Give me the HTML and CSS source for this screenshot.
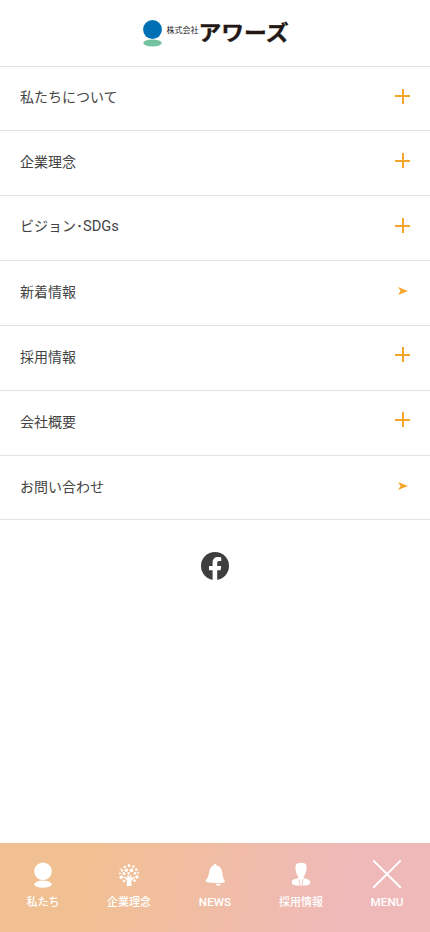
FILE: index.html
```html
<!DOCTYPE html>
<html lang="ja">
<head>
<meta charset="utf-8">
<meta name="viewport" content="width=device-width, initial-scale=1">
<title>株式会社アワーズ</title>
<link rel="stylesheet" href="styles.css">
</head>
<body>
<header class="header">
  <a class="logo">
    <svg class="logo-mark" viewBox="0 0 19 27"><circle cx="9.5" cy="9.5" r="9.4" fill="#0070b5"/><ellipse cx="9.5" cy="23" rx="9.3" ry="3.5" fill="#72c29f"/></svg>
    <svg class="logo-text" viewBox="0 0 124 27">
      <text class="logo-prefix" x="0.5" y="12.5" textLength="32" lengthAdjust="spacingAndGlyphs">株式会社</text>
      <text class="logo-name" x="32.5" y="20" textLength="90" lengthAdjust="spacingAndGlyphs">アワーズ</text>
    </svg>
  </a>
</header>
<nav class="menu">
  <a class="row"><span>私たちについて</span><i class="plus"></i></a>
  <a class="row"><span>企業理念</span><i class="plus"></i></a>
  <a class="row"><span>ビジョン<span class="dot">･</span><span class="latin">SDGs</span></span><i class="plus"></i></a>
  <a class="row"><span>新着情報</span><svg class="arrow" viewBox="0 0 10 8"><path d="M0 0 10 4 0 8 2.6 4Z"/></svg></a>
  <a class="row"><span>採用情報</span><i class="plus raised"></i></a>
  <a class="row"><span>会社概要</span><i class="plus raised"></i></a>
  <a class="row"><span>お問い合わせ</span><svg class="arrow" viewBox="0 0 10 8"><path d="M0 0 10 4 0 8 2.6 4Z"/></svg></a>
</nav>
<div class="social">
  <svg viewBox="0 0 28 28"><circle cx="14" cy="14" r="14" fill="#3e3e3e"/><path fill="#fff" d="M11.6 28V18.2H8v-4.3h3.6v-3.2c0-3.8 2.1-5.7 5.5-5.7 1.5 0 3.1.3 3.1.3v3.6h-1.8c-1.6 0-2.2.9-2.2 2.1v2.9h4l-.6 4.3h-3.4V28Z"/></svg>
</div>
<footer class="tabs">
  <a class="tab"><svg viewBox="0 0 30 30"><circle cx="15" cy="12.2" r="8.8"/><ellipse cx="15" cy="25.2" rx="8.7" ry="3.6"/></svg><span>私たち</span></a>
  <a class="tab"><svg viewBox="0 0 30 30"><path d="M12.4 27c.8-2.4.6-4.6.2-6.3L9.3 18l.7-.7 3.2 1.8.4-3h1.2l.4 2.6 1.4-2.9.9.4-.3 2.9 3-1.6.8.7-3.4 3.2c-.4 1.8-.4 3.8.2 5.6Z"/><circle cx="15" cy="6.7" r="1.4"/><circle cx="10.7" cy="8" r="1.3"/><circle cx="19.3" cy="7.5" r="1.3"/><circle cx="22.3" cy="10.5" r="1.2"/><circle cx="17.5" cy="11.3" r="1.9"/><circle cx="12.3" cy="11.3" r="1.7"/><circle cx="8" cy="11.5" r="1.2"/><circle cx="10" cy="14.5" r="1.5"/><circle cx="6" cy="14.5" r="1"/><circle cx="7.3" cy="18.3" r="1.8"/><circle cx="14.6" cy="14.3" r="1.2"/><circle cx="21" cy="14.3" r="1.4"/><circle cx="24.2" cy="13.8" r="1"/><circle cx="23" cy="18" r="1.7"/><circle cx="20.5" cy="21.6" r="1.3"/><circle cx="10" cy="22" r="1.3"/><circle cx="6.2" cy="10" r=".7"/></svg><span>企業理念</span></a>
  <a class="tab"><svg viewBox="0 0 30 30"><path d="M13.6 6.6c0-2.2 3-2.2 3 0 4.2 1 5.2 4 5.7 7.4.5 3.7 1 5.9 2.4 8 .4 1-.2 1.7-1.1 1.7-5.6.9-11.7.3-17.1-.7-.9-.2-1.2-1-.7-1.7 2.3-2.2 2.6-4.8 3.3-8 .8-3.6 1.8-6.1 4.5-6.7ZM15.8 24.9h5c-.2 2.6-4.6 2.6-5 0Z"/></svg><span class="latin-label">NEWS</span></a>
  <a class="tab"><svg viewBox="0 0 30 30"><path d="M10 6c.6-2.8 9.4-3 10.2 0 .7 2.2.6 4.4 0 6-.4 2.2-1.4 4-2.4 5.2v1.7c3 1.2 6.4 1.4 6.5 4.3 0 2.8-2.5 3.2-9.3 3.3-6.8-.1-9.3-.5-9.3-3.3.1-2.9 3.5-3.1 6.5-4.3v-1.7c-1-1.2-2-3-2.4-5.2-.6-1.6-.4-4.3.2-6Z"/><path class="tie" d="m12.8 20 1.1 6M17.2 20l-1.1 6"/></svg><span>採用情報</span></a>
  <a class="tab"><svg viewBox="0 0 30 30"><path class="close" d="m1.2 1.4 27.6 27.4M28.8 1.4 1.2 28.8"/></svg><span class="latin-label">MENU</span></a>
</footer>
</body>
</html>
```

FILE: styles.css
```css
* { box-sizing: border-box; }
body {
  margin: 0;
  height: 932px;
  display: flex;
  flex-direction: column;
  background: #fff;
  color: #444;
  font-family: "Noto Sans CJK JP", sans-serif;
}
.header {
  height: 67px;
  flex: none;
  padding-top: 20px;
  border-bottom: 1px solid #e2e2e2;
}
.logo { display: flex; padding-left: 143px; gap: 4px; }
.logo-mark { width: 19px; height: 27px; }
.logo-text { width: 124px; height: 27px; overflow: visible; }
.logo-prefix { font: 8px "Noto Sans CJK JP", sans-serif; fill: #222; }
.logo-name { font: 700 21px "Noto Sans CJK JP", sans-serif; fill: #231815; stroke: #231815; stroke-width: .4; }
.menu { flex: none; }
.row {
  height: 65px;
  display: flex;
  align-items: center;
  justify-content: space-between;
  padding: 0 20px 5px;
  border-bottom: 1px solid #e2e2e2;
  font-size: 14px;
  line-height: 20px;
}
.row:first-child, .row:last-child { height: 64px; }
.row:last-child { padding-bottom: 3px; }
.latin { font-family: Roboto, sans-serif; font-size: 14.7px; }
.plus {
  width: 15px;
  height: 15px;
  background:
    linear-gradient(#f5a52c, #f5a52c) center / 15px 2px no-repeat,
    linear-gradient(#f5a52c, #f5a52c) center / 2px 15px no-repeat;
}
.raised { margin-bottom: 2px; }
.arrow { width: 10px; height: 8px; margin-right: 2px; fill: #f5a52c; }
.social { display: flex; justify-content: center; padding-top: 32px; }
.social svg { width: 28px; height: 28px; }
.tabs {
  height: 89px;
  margin-top: auto;
  display: grid;
  grid-template-columns: repeat(5, 1fr);
  padding-top: 16px;
  background: linear-gradient(100deg, #f1c092 20%, #efb9b9 80%);
  color: #fff;
}
.tab { display: flex; flex-direction: column; align-items: center; }
.tab svg { width: 30px; height: 30px; fill: #fff; }
.tab span { margin-top: 4px; font-size: 11px; line-height: 16px; font-weight: 500; white-space: nowrap; }
.tab .latin-label { margin-top: 5px; font-family: Roboto, sans-serif; font-size: 11.7px; }
.tab .tie { stroke: #efbab0; stroke-width: .8; fill: none; }
.tab .close { stroke: #fff; stroke-width: 2; fill: none; }
```
